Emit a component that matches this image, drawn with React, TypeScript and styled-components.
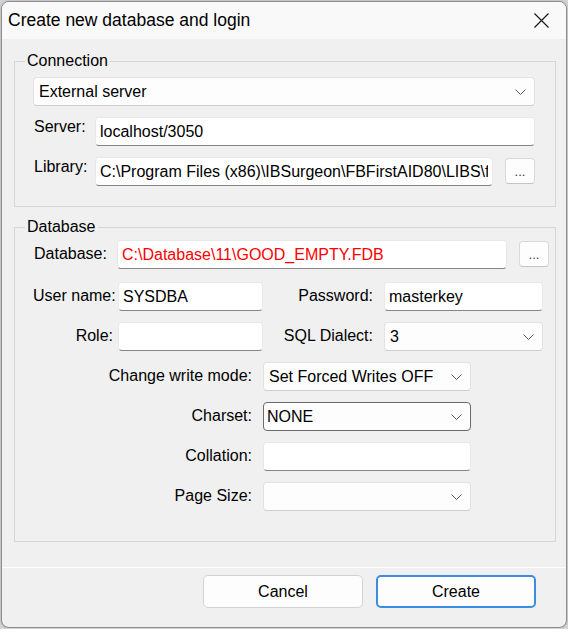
import styled, { createGlobalStyle } from "styled-components";

const GlobalStyle = createGlobalStyle`
  html, body {
    margin: 0;
    padding: 0;
    background: #d4d4d4;
  }
  body {
    font-family: "Liberation Sans", Arial, sans-serif;
  }
  * {
    box-sizing: border-box;
  }
`;

function Chevron() {
  return (
    <svg width="11" height="6" viewBox="0 0 11 6">
      <path d="M0.5 0.5 L5.5 5.5 L10.5 0.5" stroke="#5c5c5c" strokeWidth="1" fill="none" />
    </svg>
  );
}

function ComboBox({ value, focused }: { value: string; focused?: boolean }) {
  return (
    <Combo $focused={focused}>
      <span>{value}</span>
      <Chevron />
    </Combo>
  );
}

export default function App() {
  return (
    <>
      <GlobalStyle />
      <Window>
        <TitleBar>
          <Title>Create new database and login</Title>
          <CloseButton aria-label="Close">
            <svg width="15" height="15" viewBox="0 0 15 15">
              <path d="M0.5 0.5 L14.5 14.5 M14.5 0.5 L0.5 14.5" stroke="#1b1b1b" strokeWidth="1.2" />
            </svg>
          </CloseButton>
        </TitleBar>

        <Body>
          <Group $pad="7px 20px 20px 18px">
            <Legend>Connection</Legend>
            <Stack>
              <ComboBox value="External server" />
              <ConnRow>
                <ConnLabel>Server:</ConnLabel>
                <TextBox readOnly value="localhost/3050" />
              </ConnRow>
              <ConnRow>
                <ConnLabel>Library:</ConnLabel>
                <TextBox readOnly value="C:\Program Files (x86)\IBSurgeon\FBFirstAID80\LIBS\fbclient.dll" />
                <Browse>...</Browse>
              </ConnRow>
            </Stack>
          </Group>

          <Group $pad="4px 6px 30px 18px" $top={11}>
            <Legend>Database</Legend>
            <Stack>
              <DbRow>
                <DbLabel>Database:</DbLabel>
                <TextBox readOnly $error value="C:\Database\11\GOOD_EMPTY.FDB" />
                <Browse>...</Browse>
              </DbRow>
              <PairRow>
                <RightLabel $pad={5}>User name:</RightLabel>
                <TextBox readOnly value="SYSDBA" />
                <RightLabel $pad={11}>Password:</RightLabel>
                <TextBox readOnly value="masterkey" />
              </PairRow>
              <PairRow>
                <RightLabel $pad={5}>Role:</RightLabel>
                <TextBox readOnly value="" />
                <RightLabel $pad={11}>SQL Dialect:</RightLabel>
                <ComboBox value="3" />
              </PairRow>
              <CenterRow>
                <RightLabel $pad={11}>Change write mode:</RightLabel>
                <ComboBox value="Set Forced Writes OFF" />
              </CenterRow>
              <CenterRow>
                <RightLabel $pad={11}>Charset:</RightLabel>
                <ComboBox value="NONE" focused />
              </CenterRow>
              <CenterRow>
                <RightLabel $pad={11}>Collation:</RightLabel>
                <TextBox readOnly value="" />
              </CenterRow>
              <CenterRow>
                <RightLabel $pad={11}>Page Size:</RightLabel>
                <ComboBox value="" />
              </CenterRow>
            </Stack>
          </Group>
        </Body>

        <Footer>
          <PushButton>Cancel</PushButton>
          <PushButton $primary>Create</PushButton>
        </Footer>
      </Window>
    </>
  );
}

const Window = styled.div`
  margin: 1px 0 0 1px;
  width: 566px;
  height: 627px;
  display: flex;
  flex-direction: column;
  background: #f0f0f0;
  border: 1px solid #8e8e8e;
  border-radius: 8px;
  overflow: hidden;
  box-shadow: 0 0 2px rgba(0, 0, 0, 0.25);
  color: #000;
  font-size: 16px;
`;

const TitleBar = styled.div`
  height: 37px;
  flex: none;
  display: flex;
  align-items: center;
  justify-content: space-between;
  padding: 0 17px 0 6px;
  background: #f9f9f9;
`;

const Title = styled.div`
  font-size: 17.5px;
  color: #000;
`;

const CloseButton = styled.div`
  display: flex;
  width: 15px;
  height: 15px;
`;

const Body = styled.div`
  flex: 1;
  padding: 13px 10px 0 12px;
`;

const Group = styled.fieldset<{ $pad: string; $top?: number }>`
  margin: ${(p) => p.$top ?? 0}px 0 0 0;
  padding: ${(p) => p.$pad};
  border: 1px solid #d6d6d6;
  min-width: 0;
`;

const Legend = styled.legend`
  margin-left: -8px;
  padding: 0 2px;
  line-height: 18px;
  font-size: 16px;
`;

const Stack = styled.div`
  display: flex;
  flex-direction: column;
  gap: 11px;
`;

const ConnRow = styled.div`
  display: flex;
  align-items: flex-start;
  height: 29px;
`;

const ConnLabel = styled.div`
  width: 62px;
  flex: none;
  padding: 1px 0 0 1px;
  line-height: 18px;
`;

const DbRow = styled.div`
  display: flex;
  align-items: center;
  height: 29px;
  margin-bottom: 2px;

  & > input {
    flex: 1;
  }
`;

const DbLabel = styled.div`
  width: 84px;
  flex: none;
  padding: 0 0 2px 1px;
`;

const PairRow = styled.div`
  display: grid;
  grid-template-columns: 85px 145px 121px 159px;
  align-items: center;
  height: 29px;
`;

const CenterRow = styled.div`
  display: grid;
  grid-template-columns: 230px 208px;
  align-items: center;
  height: 29px;
`;

const RightLabel = styled.div<{ $pad: number }>`
  text-align: right;
  padding-right: ${(p) => p.$pad}px;
  padding-bottom: 2px;
  white-space: nowrap;
`;

const TextBox = styled.input<{ $error?: boolean }>`
  flex: 1;
  min-width: 0;
  width: 100%;
  height: 29px;
  margin: 0;
  padding: 0 4px;
  font-family: "Liberation Sans", Arial, sans-serif;
  font-size: 16px;
  color: ${(p) => (p.$error ? "#ff0000" : "#000")};
  background: #ffffff;
  border: 1px solid #e8e8e8;
  border-bottom-color: #858585;
  border-radius: 4px;
  outline: none;
`;

const Combo = styled.div<{ $focused?: boolean }>`
  height: 29px;
  display: flex;
  align-items: center;
  justify-content: space-between;
  padding: 0 8px 0 ${(p) => (p.$focused ? 3 : 5)}px;
  background: #fdfdfd;
  border: 1px solid ${(p) => (p.$focused ? "#6b6b6b" : "#e2e2e2")};
  border-bottom-color: ${(p) => (p.$focused ? "#6b6b6b" : "#cdcdcd")};
  border-radius: 4px;
  white-space: nowrap;

  svg {
    flex: none;
  }
`;

const Browse = styled.div`
  flex: none;
  align-self: flex-start;
  width: 30px;
  height: 26px;
  margin: 1px 0 0 12px;
  display: flex;
  align-items: center;
  justify-content: center;
  font-size: 13px;
  color: #3a3a3a;
  background: #fdfdfd;
  border: 1px solid #d9d9d9;
  border-bottom-color: #c4c4c4;
  border-radius: 4px;
`;

const Footer = styled.div`
  height: 60px;
  flex: none;
  display: flex;
  justify-content: flex-end;
  align-items: flex-start;
  gap: 13px;
  padding: 7px 30px 0 0;
  border-top: 1px solid #ffffff;
`;

const PushButton = styled.div<{ $primary?: boolean }>`
  width: 160px;
  height: 33px;
  display: flex;
  align-items: center;
  justify-content: center;
  font-size: 16px;
  background: #fdfdfd;
  border: ${(p) => (p.$primary ? "2px solid #3a8de2" : "1px solid #d3d3d3")};
  border-radius: 5px;
`;
